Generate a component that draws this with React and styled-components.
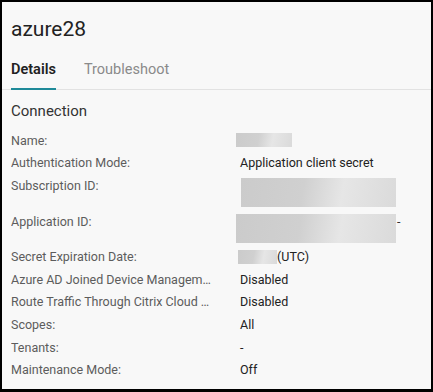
import React from 'react';
import styled, { createGlobalStyle } from 'styled-components';

const GlobalStyle = createGlobalStyle`
  html, body {
    margin: 0;
    padding: 0;
    background: #000;
  }
  body {
    font-family: Roboto, "Liberation Sans", sans-serif;
  }
`;

const Frame = styled.div`
  width: 433px;
  height: 392px;
  box-sizing: border-box;
  border: 2px solid #000;
  border-bottom-width: 3px;
  background: #f8f8f8;
  overflow: hidden;
`;

const Title = styled.h1`
  margin: 0;
  padding: 14px 9px 0;
  font-size: 21px;
  font-weight: 400;
  line-height: 26px;
  color: #222;
`;

const TabBar = styled.div`
  display: flex;
  gap: 28px;
  margin-top: 18px;
  padding: 0 9px;
  border-bottom: 1px solid #e2e2e2;
`;

const Tab = styled.div`
  font-size: 14.5px;
  line-height: 20px;
  padding-bottom: 8px;
  font-weight: ${p => (p.$active ? 600 : 400)};
  color: ${p => (p.$active ? '#222' : '#8a8a8a')};
  border-bottom: 2px solid ${p => (p.$active ? '#1f8a99' : 'transparent')};
  margin-bottom: -1px;
`;

const Section = styled.section`
  padding: 11px 9px 0;
`;

const SectionTitle = styled.h2`
  margin: 0 0 8.5px;
  font-size: 15px;
  font-weight: 400;
  line-height: 20px;
  color: #333;
`;

const Row = styled.div`
  display: flex;
  align-items: flex-start;
  padding: 3.3px 0;
  font-size: 12.5px;
  line-height: 16px;
`;

const Label = styled.div`
  width: 205px;
  flex: none;
  margin-right: 24px;
  color: #5c5c5c;
  white-space: nowrap;
  overflow: hidden;
  text-overflow: ellipsis;
`;

const Value = styled.div`
  display: flex;
  align-items: center;
  color: #222;
  min-height: 16px;
`;

const Redacted = styled.div`
  width: ${p => p.$w}px;
  height: ${p => p.$h}px;
  margin-left: ${p => p.$shift || 0}px;
  margin-top: ${p => p.$top || 0}px;
  background: linear-gradient(100deg, #cbcbcb 0%, #d0d0d0 40%, #e6e6e6 65%, #dadada 100%);
  flex: none;
`;

const Dash = styled.span`
  align-self: flex-start;
  margin-left: 1px;
  color: #333;
`;

const rows = [
  { label: 'Name:', value: <Redacted $w={56} $h={14} $shift={-4} $top={-2} /> },
  { label: 'Authentication Mode:', value: 'Application client secret' },
  { label: 'Subscription ID:', value: <Redacted $w={155} $h={29} $shift={1} /> },
  {
    label: 'Application ID:',
    value: (
      <>
        <Redacted $w={160} $h={29} $shift={-4} />
        <Dash>-</Dash>
      </>
    ),
  },
  {
    label: 'Secret Expiration Date:',
    value: (
      <>
        <Redacted $w={39} $h={14} $shift={-2} />
        (UTC)
      </>
    ),
  },
  { label: 'Azure AD Joined Device Management:', value: 'Disabled' },
  { label: 'Route Traffic Through Citrix Cloud Connectors:', value: 'Disabled' },
  { label: 'Scopes:', value: 'All' },
  { label: 'Tenants:', value: '-' },
  { label: 'Maintenance Mode:', value: 'Off' },
];

export default function App() {
  return (
    <Frame>
      <GlobalStyle />
      <Title>azure28</Title>
      <TabBar>
        <Tab $active>Details</Tab>
        <Tab>Troubleshoot</Tab>
      </TabBar>
      <Section>
        <SectionTitle>Connection</SectionTitle>
        {rows.map(r => (
          <Row key={r.label}>
            <Label>{r.label}</Label>
            <Value>{r.value}</Value>
          </Row>
        ))}
      </Section>
    </Frame>
  );
}
